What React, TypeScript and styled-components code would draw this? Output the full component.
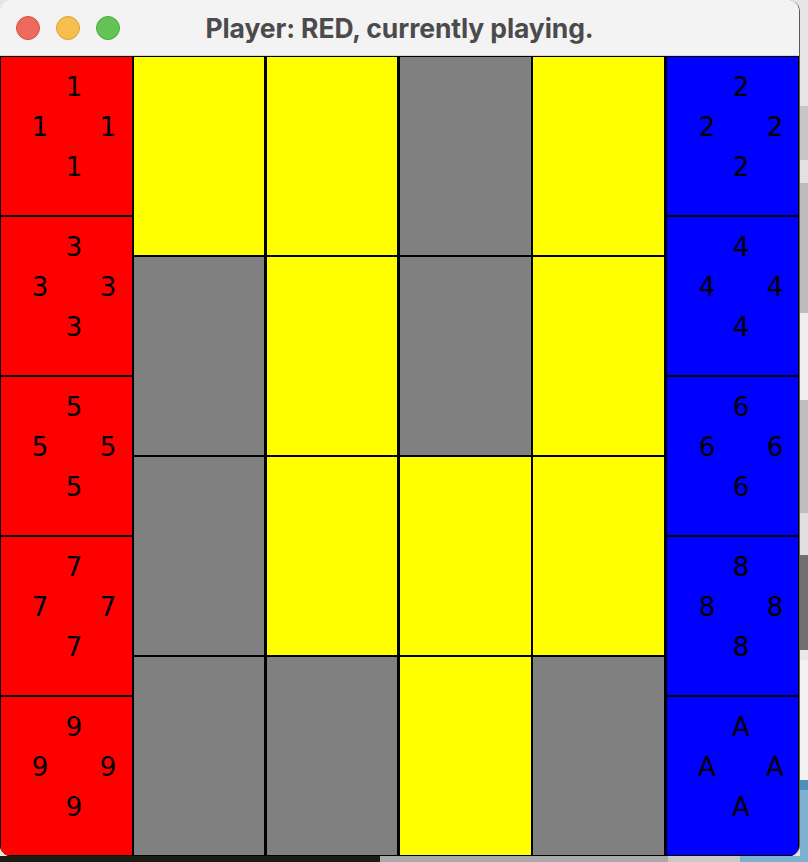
import styled, { createGlobalStyle } from 'styled-components';

const GlobalStyle = createGlobalStyle`
  html, body {
    margin: 0;
    padding: 0;
  }

  body {
    width: 808px;
    height: 862px;
    overflow: hidden;
    background: #c9c9c9;
    font-family: 'DejaVu Sans', sans-serif;
  }
`;

type Tile = 'yellow' | 'gray';

const COLORS = {
  red: '#ff0000',
  blue: '#0000ff',
  yellow: '#ffff00',
  gray: '#808080',
};

// 4x4 field, row by row
const board: Tile[][] = [
  ['yellow', 'yellow', 'gray', 'yellow'],
  ['gray', 'yellow', 'gray', 'yellow'],
  ['gray', 'yellow', 'yellow', 'yellow'],
  ['gray', 'gray', 'yellow', 'gray'],
];

const redPiles = ['1', '3', '5', '7', '9'];
const bluePiles = ['2', '4', '6', '8', 'A'];

const areas = ['n', 'w', 'e', 's'] as const;

const Pile = ({ value, color, wideLeft }: { value: string; color: string; wideLeft?: boolean }) => (
  <PileCell $color={color} $wideLeft={wideLeft}>
    {areas.map((a) => (
      <Digit key={a} $area={a}>
        {value}
      </Digit>
    ))}
  </PileCell>
);

const App = () => {
  return (
    <Desktop>
      <GlobalStyle />
      <Window>
        <TitleBar>
          <Lights>
            <Light $bg="#ee6a5f" $edge="#d25247" />
            <Light $bg="#f5be4f" $edge="#d9a23c" />
            <Light $bg="#61c454" $edge="#4fa840" />
          </Lights>
          <Title>Player: RED, currently playing.</Title>
          <span />
        </TitleBar>
        <Board>
          <Side $width={133}>
            {redPiles.map((v) => (
              <Pile key={v} value={v} color={COLORS.red} />
            ))}
          </Side>
          <Field>
            {board.map((row, r) =>
              row.map((tile, c) => (
                <Square key={`${r}-${c}`} $color={COLORS[tile]} $thick={c < 2} />
              ))
            )}
          </Field>
          <Side $width={134}>
            {bluePiles.map((v) => (
              <Pile key={v} value={v} color={COLORS.blue} wideLeft />
            ))}
          </Side>
        </Board>
      </Window>
      <RightStrip />
      <BottomStrip />
    </Desktop>
  );
};

const Desktop = styled.div`
  width: 808px;
  height: 862px;
  display: grid;
  grid-template-columns: 800px 8px;
  grid-template-rows: 856px 6px;
  background: #e4e4e4;
`;

const Window = styled.div`
  grid-row: 1;
  grid-column: 1;
  display: flex;
  flex-direction: column;
  background: #f3f3f3;
  border-right: 1px solid #5a5a5a;
  border-radius: 12px 12px 11px 11px;
  overflow: hidden;
`;

const TitleBar = styled.div`
  height: 56px;
  box-sizing: border-box;
  display: grid;
  grid-template-columns: 1fr auto 1fr;
  align-items: center;
  background: #f3f3f3;
  border-bottom: 1px solid #d8d8d8;
`;

const Lights = styled.div`
  display: flex;
  gap: 16px;
  margin: 1px 0 0 16px;
`;

const Light = styled.span<{ $bg: string; $edge: string }>`
  width: 24px;
  height: 24px;
  box-sizing: border-box;
  border-radius: 50%;
  background: ${(p) => p.$bg};
  border: 1px solid ${(p) => p.$edge};
`;

const Title = styled.h1`
  margin: 0;
  font-family: 'Inter', 'Liberation Sans', sans-serif;
  font-weight: 700;
  font-size: 26.5px;
  letter-spacing: -0.1px;
  color: #4b4b4b;
  white-space: nowrap;
`;

const Board = styled.div`
  display: flex;
  height: 800px;
  background: #000;
`;

const Side = styled.div<{ $width: number }>`
  display: flex;
  flex-direction: column;
  width: ${(p) => p.$width}px;
  flex: none;
`;

const PileCell = styled.div<{ $color: string; $wideLeft?: boolean }>`
  height: 160px;
  box-sizing: border-box;
  border: 1px solid #000;
  border-left-width: ${(p) => (p.$wideLeft ? 2 : 1)}px;
  background: ${(p) => p.$color};
  padding: 10px 0 0 ${(p) => (p.$wideLeft ? 23 : 22)}px;
  display: grid;
  grid-template-columns: repeat(3, 34px);
  grid-template-rows: repeat(3, 40px);
  grid-template-areas:
    '. n .'
    'w . e'
    '. s .';
  align-content: start;
`;

const Digit = styled.span<{ $area: string }>`
  grid-area: ${(p) => p.$area};
  font-family: 'DejaVu Sans', sans-serif;
  font-size: 26px;
  line-height: 40px;
  text-align: center;
  color: #000;
`;

const Field = styled.div`
  display: grid;
  grid-template-columns: repeat(4, 133px);
  grid-template-rows: repeat(4, 200px);
  width: 532px;
  flex: none;
`;

const Square = styled.div<{ $color: string; $thick: boolean }>`
  box-sizing: border-box;
  border: 1px solid #000;
  border-right-width: ${(p) => (p.$thick ? 2 : 1)}px;
  background: ${(p) => p.$color};
`;

const RightStrip = styled.div`
  grid-row: 1;
  grid-column: 2;
  background: linear-gradient(
    to bottom,
    #e6e6e6 0 106px,
    #c6c6c6 106px 160px,
    #e2e2e2 160px 183px,
    #bcbcbc 183px 313px,
    #efefef 313px 400px,
    #bdbdbd 400px 513px,
    #e0e0e0 513px 555px,
    #707070 555px 650px,
    #e8e8e8 650px 660px,
    #f2f2f2 660px 780px,
    #4a8fc0 780px 790px,
    #7fb1d2 790px
  );
`;

const BottomStrip = styled.div`
  grid-row: 2;
  grid-column: 1 / 3;
  background: linear-gradient(
    to right,
    #1c1c12 0 380px,
    #a9a9a9 380px 668px,
    #c9c9c9 668px 740px,
    #7ab0d0 740px
  );
`;

export default App;
